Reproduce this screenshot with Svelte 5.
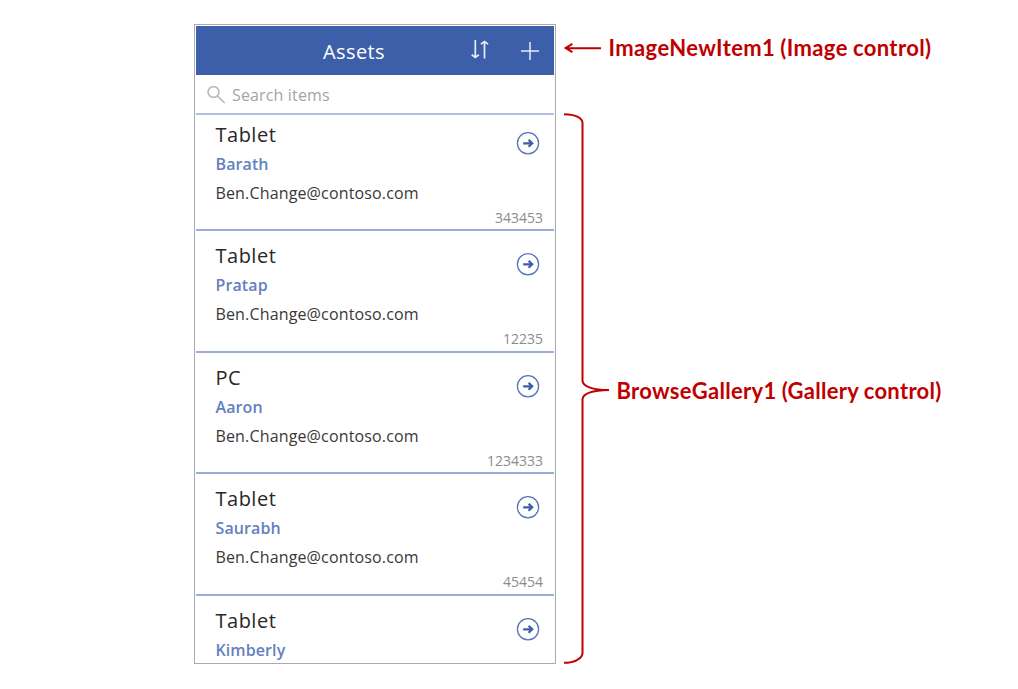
<script>
  const assets = [
    { kind: 'Tablet', owner: 'Barath', mail: 'Ben.Change@contoso.com', number: '343453' },
    { kind: 'Tablet', owner: 'Pratap', mail: 'Ben.Change@contoso.com', number: '12235' },
    { kind: 'PC', owner: 'Aaron', mail: 'Ben.Change@contoso.com', number: '1234333' },
    { kind: 'Tablet', owner: 'Saurabh', mail: 'Ben.Change@contoso.com', number: '45454' },
    { kind: 'Tablet', owner: 'Kimberly', mail: '', number: '' }
  ];
</script>

<main>
  <section class="phone">
    <header>
      <h1>Assets</h1>
      <svg class="sort" width="20" height="22" viewBox="0 0 20 22">
        <path d="M5.3 2v17M1.7 16.8 5.3 19.4l3.6-2.6M14.5 20.5V3.5M10.9 6.1 14.5 3.5l3.6 2.6" />
      </svg>
      <svg class="plus" width="20" height="20" viewBox="0 0 20 20">
        <path d="M1 10h18M10 1v18" />
      </svg>
    </header>
    <div class="search">
      <svg width="20" height="20" viewBox="0 0 20 20">
        <circle cx="7.5" cy="7" r="5.4" />
        <path d="m11.3 10.8 7.4 7.2" />
      </svg>
      <span>Search items</span>
    </div>
    <div class="gallery">
      {#each assets as asset}
        <article>
          <div class="info">
            <h2>{asset.kind}</h2>
            <strong>{asset.owner}</strong>
            <p>{asset.mail}</p>
          </div>
          <div class="side">
            <svg width="24" height="24" viewBox="0 0 24 24">
              <circle cx="12" cy="12.3" r="10.6" />
              <path d="M7.2 12.3h9M12.6 8.9 16.2 12.3l-3.6 3.4" />
            </svg>
            <span>{asset.number}</span>
          </div>
        </article>
      {/each}
    </div>
  </section>
  <aside>
    <div class="note first">
      <svg width="40" height="12" viewBox="0 0 40 12">
        <path d="M38 6.2 3 6M9.4 1.8 2.6 6l6.8 4.2" />
      </svg>
      <b class="new-item">ImageNewItem1 (Image control)</b>
    </div>
    <div class="note range">
      <svg width="48" height="554" viewBox="0 0 48 554">
        <path d="M1 2.2C12 2.2 19.5 6 19.5 11V268.5C19.5 274 29 278 46 278C29 278 19.5 282 19.5 287.5V541C19.5 546 12 550.8 1 550.8" />
      </svg>
      <b class="browse">BrowseGallery1 (Gallery control)</b>
    </div>
  </aside>
</main>

<style>
  :global(body) {
    margin: 0;
    background: #fff;
  }
  main {
    box-sizing: border-box;
    width: 1018px;
    height: 689px;
    padding: 24px 0 0 194px;
    display: flex;
    overflow: hidden;
    font-family: "Open Sans", "Noto Sans", sans-serif;
  }
  .phone {
    box-sizing: border-box;
    flex: none;
    width: 362px;
    height: 640px;
    border: 1px solid #aaa9ab;
    padding: 1px;
    display: flex;
    flex-direction: column;
    overflow: hidden;
  }
  header {
    flex: none;
    height: 49px;
    background: #3d5fa9;
    display: flex;
    align-items: center;
    box-sizing: border-box;
    padding: 2px 0 0 127px;
  }
  h1 {
    margin: 0;
    width: 147px;
    font-size: 20px;
    font-weight: 400;
    line-height: 28px;
    letter-spacing: 0.4px;
    color: #fff;
  }
  svg {
    display: block;
    flex: none;
    fill: none;
  }
  header svg {
    stroke: #e8edf8;
    stroke-width: 1.7;
  }
  .sort {
    margin-top: -5px;
  }
  header .plus {
    margin: -2px 0 0 30px;
    stroke-width: 1.5;
  }
  .search {
    flex: none;
    box-sizing: border-box;
    height: 40px;
    border-bottom: 2px solid #b2bfe0;
    display: flex;
    align-items: center;
    padding: 1px 0 0 10px;
    gap: 6px;
    color: #a5a5a5;
    font-size: 16px;
    letter-spacing: 0.15px;
  }
  .search svg {
    stroke: #bcbcbc;
    stroke-width: 1.7;
  }
  .gallery {
    flex: 1;
    min-height: 0;
    overflow: hidden;
  }
  article {
    box-sizing: border-box;
    height: 121.5px;
    padding: 11.4px 11px 0 19.5px;
    border-bottom: 2px solid #9aadd8;
    display: flex;
    justify-content: space-between;
  }
  article:first-child {
    height: 116px;
    padding-top: 6px;
  }
  h2 {
    margin: 0;
    color: #2b2728;
    font-size: 20px;
    line-height: 28px;
    font-weight: 400;
    letter-spacing: 0.5px;
  }
  strong {
    display: block;
    margin-top: 3px;
    color: #6480bf;
    font-size: 16px;
    line-height: 24px;
    font-weight: 600;
    letter-spacing: 0.1px;
  }
  p {
    margin: 5px 0 0;
    color: #3a3738;
    font-size: 16px;
    line-height: 24px;
    letter-spacing: 0.15px;
  }
  .side {
    display: flex;
    flex-direction: column;
    align-items: flex-end;
  }
  .side svg {
    margin: 10px 3.5px 0 0;
    stroke: #3d5fa9;
  }
  .side circle {
    stroke-width: 1.3;
    stroke: #5877b8;
  }
  .side path {
    stroke-width: 2.2;
  }
  .side span {
    margin-top: 53px;
    color: #8b8b8b;
    font-size: 14px;
    line-height: 20px;
  }
  aside {
    flex: 1;
    color: #c00000;
    font-family: Lato, sans-serif;
    font-size: 22px;
    padding: 10px 0 0 7px;
  }
  aside svg {
    stroke: #c00000;
    stroke-width: 2;
  }
  .note {
    display: flex;
    align-items: center;
    white-space: nowrap;
  }
  .first {
    height: 28px;
  }
  b {
    letter-spacing: 0.38px;
    word-spacing: -0.6px;
  }
  .new-item {
    margin: -2px 0 0 5.5px;
  }
  .range {
    margin-top: 50px;
  }
  .browse {
    margin: 2px 0 0 5.5px;
    letter-spacing: 0.3px;
  }
</style>
